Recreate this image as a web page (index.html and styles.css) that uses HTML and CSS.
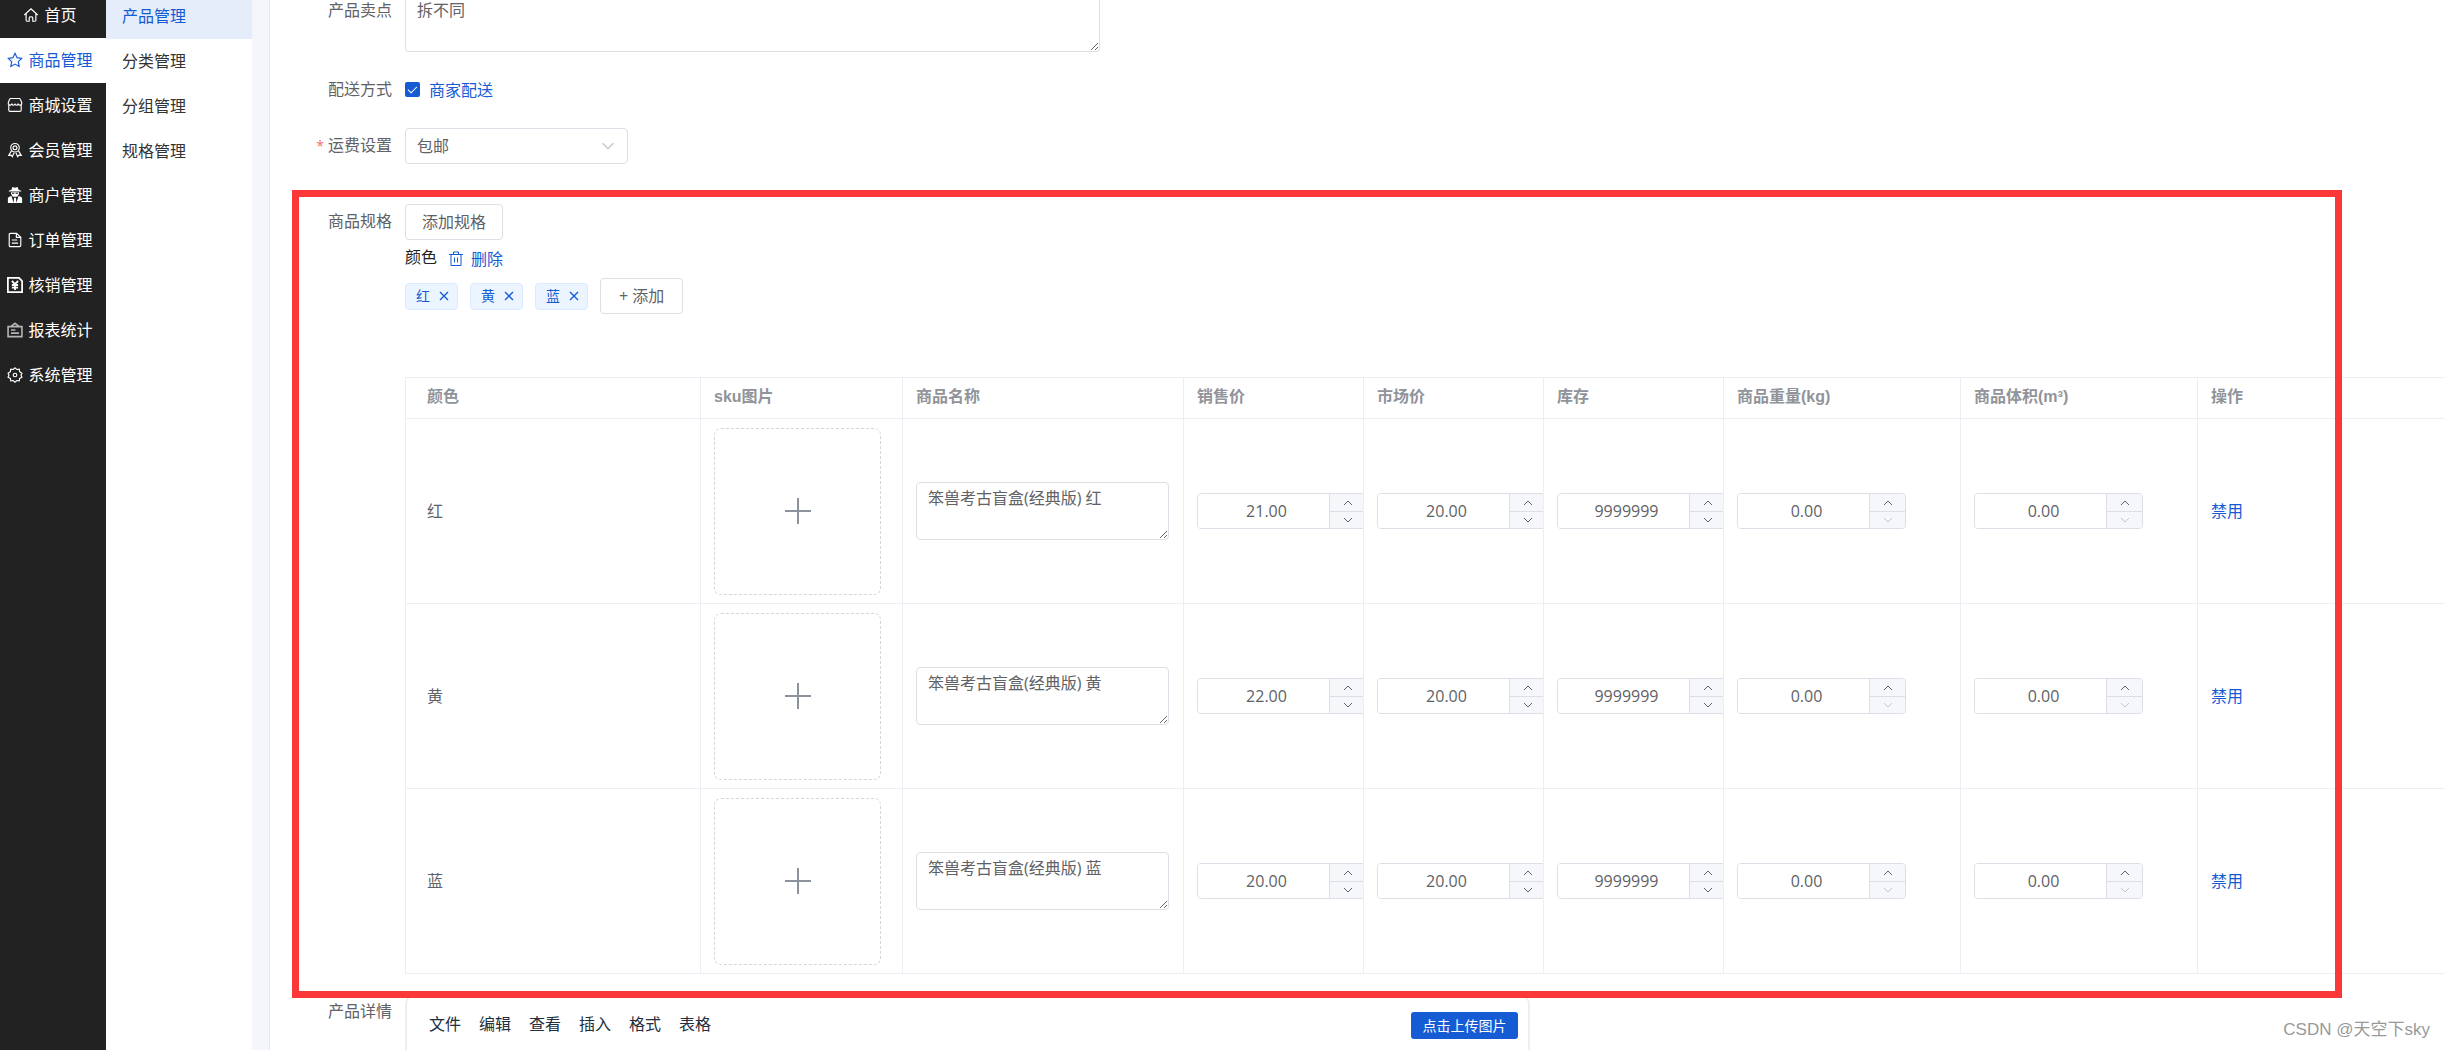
FILE: index.html
```html
<!DOCTYPE html>
<html lang="zh-CN">
<head>
<meta charset="utf-8">
<title>产品管理</title>
<link rel="stylesheet" href="styles.css">
</head>
<body>
<svg class="defs" aria-hidden="true">
  <symbol id="up" viewBox="0 0 12 12"><path d="M2 8l4-4 4 4"/></symbol>
  <symbol id="down" viewBox="0 0 12 12"><path d="M2 4l4 4 4-4"/></symbol>
  <symbol id="plus" viewBox="0 0 26 26"><path d="M13 0v26M0 13h26"/></symbol>
  <symbol id="close" viewBox="0 0 10 10"><path d="M1 1l8 8M9 1L1 9"/></symbol>
</svg>
<div class="app">
  <nav class="sidebar">
    <a href="#"><svg viewBox="0 0 18 18"><path d="M1.500 9L9 2l7.500 7M3.500 7.500V15q0 1 1 1H7v-4q0-1 2-1t2 1v4h2.500q1 0 1-1V7.500"/></svg>首页</a>
    <a href="#" class="active"><svg viewBox="0 0 18 18"><path d="M9 1.500l2.300 4.900 5.200.7-3.800 3.700 1 5.400L9 13.600l-4.700 2.600 1-5.400L1.500 7.100l5.200-.7z"/></svg>商品管理</a>
    <a href="#"><svg viewBox="0 0 18 18"><path d="M1.500 8.500V6L3 2.500q.3-.8 1-.8h10q.7 0 1 .8L16.500 6v2.500M2 8.500v6q0 1.700 1.500 1.700h11q1.500 0 1.500-1.700v-6M1.500 8.500q2.500 1.500 4-.5Q7 10.500 9 8q2 2.500 3.500 0 1.500 2 4 .5"/></svg>商城设置</a>
    <a href="#"><svg viewBox="0 0 18 18"><circle cx="9" cy="6.500" r="4.800"/><circle cx="9" cy="6.500" r="2.200"/><path d="M5 10l-3 5 2.500-.2L6 16.500l2-4.500M13 10l3 5-2.500-.2-1.500 1.700-2-4.500"/></svg>会员管理</a>
    <a href="#"><svg viewBox="0 0 18 18" class="solid"><path d="M6 0l3 .8L12 0l1 3 3 1.200v.8H2v-.8L5 3zM4.500 6h9v2l-2 3h-5l-2-3zM1 18v-5q0-2 4-3l2.500 8zM17 18v-5q0-2-4-3l-2.500 8zM8 12h2l.6 6H7.400z"/><path class="cut" d="M5.500 6.500h2.800v1.200H5.500zM9.700 6.500h2.800v1.200H9.700z"/></svg>商户管理</a>
    <a href="#"><svg viewBox="0 0 18 18"><path d="M3.800 1.500h7L15.500 6v9q0 1.500-1.300 1.500H3.800q-1.300 0-1.300-1.500V3q0-1.500 1.300-1.500zM10.500 1.500V6h5M5.500 9h6M5.500 12.500h7"/></svg>订单管理</a>
    <a href="#"><svg viewBox="0 0 18 18" class="bold"><path d="M1 1h12.500L17 4.500V17H1zM5.500 4.500L9 8l3.500-3.500M5.500 9h7M5.500 12h7M9 8v6.500"/></svg>核销管理</a>
    <a href="#"><svg viewBox="0 0 18 18" class="gray"><path d="M1.200 5.200h15.600v11.300H1.200zM4.500 5L9 1.500 13.500 5M4.500 9h5M4.500 12.500h9"/></svg>报表统计</a>
    <a href="#"><svg viewBox="0 0 18 18"><path d="M9 1l2 1.800 2.800-.4.400 2.800L16.800 7l-1 2 1 2.500-2.600 1.400-.4 2.700-2.800-.4L9 17l-2-1.800-2.800.4-.4-2.700-2.600-1.400 1-2.500-1-2 2.600-1.800.4-2.800 2.800.4z"/><circle cx="9" cy="9" r="2"/></svg>系统管理</a>
  </nav>
  <nav class="submenu">
    <a href="#" class="active">产品管理</a>
    <a href="#">分类管理</a>
    <a href="#">分组管理</a>
    <a href="#">规格管理</a>
  </nav>
  <main class="content">
    <div class="row">
      <label for="selling">产品卖点</label>
      <textarea id="selling" class="selling">拆不同</textarea>
    </div>
    <div class="row delivery">
      <span class="label">配送方式</span>
      <label class="check"><input type="checkbox" checked>商家配送</label>
    </div>
    <div class="row freight">
      <label for="freight" class="required">运费设置</label>
      <div class="select"><select id="freight"><option>包邮</option></select><svg><use href="#down"/></svg></div>
    </div>
    <section class="row spec">
      <span class="label">商品规格</span>
      <div class="spec-body">
        <button type="button" class="btn">添加规格</button>
        <div class="spec-name"><span>颜色</span>
          <button type="button" class="link"><svg viewBox="0 0 16 16"><path d="M1 3.500h14M3 3.500v11h10v-11M5.500 3V1h5v2M6.500 6.500v5M9.500 6.500v5"/></svg>删除</button>
        </div>
        <div class="tags">
          <span class="tag">红<button type="button" aria-label="移除红"><svg><use href="#close"/></svg></button></span>
          <span class="tag">黄<button type="button" aria-label="移除黄"><svg><use href="#close"/></svg></button></span>
          <span class="tag">蓝<button type="button" aria-label="移除蓝"><svg><use href="#close"/></svg></button></span>
          <button type="button" class="btn">+ 添加</button>
        </div>
        <table>
          <colgroup><col class="c-color"><col class="c-image"><col class="c-name"><col class="c-num"><col class="c-num"><col class="c-num"><col class="c-size"><col class="c-size"><col></colgroup>
          <thead>
            <tr><th>颜色</th><th>sku图片</th><th>商品名称</th><th>销售价</th><th>市场价</th><th>库存</th><th>商品重量(kg)</th><th>商品体积(m³)</th><th>操作</th></tr>
          </thead>
          <tbody>
            <tr>
              <td>红</td>
              <td><button type="button" class="upload" aria-label="上传图片"><svg><use href="#plus"/></svg></button></td>
              <td><textarea aria-label="商品名称">笨兽考古盲盒(经典版) 红</textarea></td>
              <td><div class="number"><input type="text" aria-label="销售价" value="21.00"><button type="button" aria-label="增加"><svg><use href="#up"/></svg></button><button type="button" aria-label="减少"><svg><use href="#down"/></svg></button></div></td>
              <td><div class="number"><input type="text" aria-label="市场价" value="20.00"><button type="button" aria-label="增加"><svg><use href="#up"/></svg></button><button type="button" aria-label="减少"><svg><use href="#down"/></svg></button></div></td>
              <td><div class="number"><input type="text" aria-label="库存" value="9999999"><button type="button" aria-label="增加"><svg><use href="#up"/></svg></button><button type="button" aria-label="减少"><svg><use href="#down"/></svg></button></div></td>
              <td><div class="number"><input type="text" aria-label="商品重量" value="0.00"><button type="button" aria-label="增加"><svg><use href="#up"/></svg></button><button type="button" aria-label="减少" disabled><svg><use href="#down"/></svg></button></div></td>
              <td><div class="number"><input type="text" aria-label="商品体积" value="0.00"><button type="button" aria-label="增加"><svg><use href="#up"/></svg></button><button type="button" aria-label="减少" disabled><svg><use href="#down"/></svg></button></div></td>
              <td><button type="button" class="link">禁用</button></td>
            </tr>
            <tr>
              <td>黄</td>
              <td><button type="button" class="upload" aria-label="上传图片"><svg><use href="#plus"/></svg></button></td>
              <td><textarea aria-label="商品名称">笨兽考古盲盒(经典版) 黄</textarea></td>
              <td><div class="number"><input type="text" aria-label="销售价" value="22.00"><button type="button" aria-label="增加"><svg><use href="#up"/></svg></button><button type="button" aria-label="减少"><svg><use href="#down"/></svg></button></div></td>
              <td><div class="number"><input type="text" aria-label="市场价" value="20.00"><button type="button" aria-label="增加"><svg><use href="#up"/></svg></button><button type="button" aria-label="减少"><svg><use href="#down"/></svg></button></div></td>
              <td><div class="number"><input type="text" aria-label="库存" value="9999999"><button type="button" aria-label="增加"><svg><use href="#up"/></svg></button><button type="button" aria-label="减少"><svg><use href="#down"/></svg></button></div></td>
              <td><div class="number"><input type="text" aria-label="商品重量" value="0.00"><button type="button" aria-label="增加"><svg><use href="#up"/></svg></button><button type="button" aria-label="减少" disabled><svg><use href="#down"/></svg></button></div></td>
              <td><div class="number"><input type="text" aria-label="商品体积" value="0.00"><button type="button" aria-label="增加"><svg><use href="#up"/></svg></button><button type="button" aria-label="减少" disabled><svg><use href="#down"/></svg></button></div></td>
              <td><button type="button" class="link">禁用</button></td>
            </tr>
            <tr>
              <td>蓝</td>
              <td><button type="button" class="upload" aria-label="上传图片"><svg><use href="#plus"/></svg></button></td>
              <td><textarea aria-label="商品名称">笨兽考古盲盒(经典版) 蓝</textarea></td>
              <td><div class="number"><input type="text" aria-label="销售价" value="20.00"><button type="button" aria-label="增加"><svg><use href="#up"/></svg></button><button type="button" aria-label="减少"><svg><use href="#down"/></svg></button></div></td>
              <td><div class="number"><input type="text" aria-label="市场价" value="20.00"><button type="button" aria-label="增加"><svg><use href="#up"/></svg></button><button type="button" aria-label="减少"><svg><use href="#down"/></svg></button></div></td>
              <td><div class="number"><input type="text" aria-label="库存" value="9999999"><button type="button" aria-label="增加"><svg><use href="#up"/></svg></button><button type="button" aria-label="减少"><svg><use href="#down"/></svg></button></div></td>
              <td><div class="number"><input type="text" aria-label="商品重量" value="0.00"><button type="button" aria-label="增加"><svg><use href="#up"/></svg></button><button type="button" aria-label="减少" disabled><svg><use href="#down"/></svg></button></div></td>
              <td><div class="number"><input type="text" aria-label="商品体积" value="0.00"><button type="button" aria-label="增加"><svg><use href="#up"/></svg></button><button type="button" aria-label="减少" disabled><svg><use href="#down"/></svg></button></div></td>
              <td><button type="button" class="link">禁用</button></td>
            </tr>
          </tbody>
        </table>
      </div>
      <div class="highlight"></div>
    </section>
    <div class="row detail">
      <span class="label">产品详情</span>
      <div class="editor">
        <div class="menubar">
          <button type="button">文件</button><button type="button">编辑</button><button type="button">查看</button><button type="button">插入</button><button type="button">格式</button><button type="button">表格</button>
        </div>
        <button type="button" class="primary">点击上传图片</button>
      </div>
    </div>
    <div class="watermark">CSDN @天空下sky</div>
  </main>
</div>
</body>
</html>
```
FILE: styles.css
```css
* { box-sizing: border-box; }

body {
  margin: 0;
  font: 16px/24px "Open Sans", "Noto Sans CJK SC", sans-serif;
  color: #606266;
  background: #fff;
}

button, input, select, textarea { font: inherit; color: inherit; }
button { padding: 0; border: 0; background: none; }
a { text-decoration: none; }
svg { fill: none; stroke: currentColor; flex: none; }
.defs { display: none; }

.app { display: flex; height: 100vh; overflow: hidden; }

/* Navigation, scrolled a few pixels down */
.sidebar { flex: 0 0 106px; background: #222; color: #fff; }
.sidebar a {
  display: flex;
  align-items: center;
  justify-content: center;
  gap: 5px;
  height: 45px;
  padding: 0 6px 2px 0;
  color: inherit;
}
.sidebar a:first-child { margin-top: -7px; }
.sidebar a.active { background: #fff; color: #155bd4; }
.sidebar svg { width: 16px; height: 16px; stroke-width: 1.3; }
.sidebar .solid { fill: #fff; stroke: none; }
.sidebar .cut { fill: #222; }
.sidebar .bold { stroke-width: 2; }
.sidebar .gray { color: #b4b4b4; stroke-width: 1.8; }

.submenu { flex: 0 0 146px; }
.submenu a {
  display: flex;
  align-items: center;
  height: 45px;
  padding: 0 0 2px 16px;
  color: #333;
}
.submenu a:first-child { margin-top: -6px; }
.submenu a.active { background: #e5ecfa; color: #155bd4; }

.content {
  flex: 1;
  min-width: 0;
  display: flex;
  flex-direction: column;
  border-left: 17px solid #f4f6fb;
  box-shadow: inset 1px 0 #e4e7ed;
}

.row {
  display: grid;
  grid-template-columns: 123px minmax(0, 1fr);
  column-gap: 13px;
}
.row > label:first-child, .label { text-align: right; line-height: 34px; }
.row > label[for="selling"] { line-height: 20px; }

textarea {
  display: block;
  width: 253px;
  height: 58px;
  padding: 3px 11px;
  border: 1px solid #dcdfe6;
  border-radius: 4px;
  background: #fff;
}
.selling {
  width: 695px;
  height: 52px;
  padding-top: 0;
  border-top: 0;
  border-radius: 0 0 4px 4px;
  line-height: 20px;
}

.delivery { margin-top: 20px; }
.check { display: flex; align-items: center; gap: 9px; height: 36px; padding-bottom: 1px; color: #155bd4; }
.check input {
  appearance: none;
  display: grid;
  place-items: center;
  width: 15px;
  height: 15px;
  margin: 0;
  border-radius: 2px;
  background: #155bd4;
}
.check input::after {
  content: "";
  width: 4px;
  height: 8px;
  margin-bottom: 2px;
  border: solid #fff;
  border-width: 0 1px 1px 0;
  rotate: 45deg;
}

.freight { margin-top: 20px; }
.required::before { content: "*"; margin-right: 4px; color: #f56c6c; font-size: 14px; line-height: 1; }
.select { display: grid; width: 223px; height: 36px; align-items: center; }
.select > * { grid-area: 1 / 1; }
.select select {
  appearance: none;
  height: 36px;
  padding: 0 11px;
  border: 1px solid #dcdfe6;
  border-radius: 4px;
  background: #fff;
}
.select svg { justify-self: end; width: 16px; height: 16px; margin-right: 12px; color: #c0c4cc; pointer-events: none; }

.spec { position: relative; margin-top: 40px; }
.spec-body { display: flex; flex-direction: column; align-items: flex-start; }
.btn {
  height: 36px;
  padding: 0 16px;
  border: 1px solid #dcdfe6;
  border-radius: 4px;
  background: #fff;
}
.spec-name { display: flex; align-items: center; gap: 11px; height: 38px; color: #222; }
.spec-name span { padding-bottom: 4px; }
.link { display: flex; align-items: center; gap: 7px; color: #155bd4; }
.link svg { width: 16px; height: 16px; }

.tags { display: flex; align-items: center; gap: 12px; margin-bottom: 63px; }
.tag {
  display: flex;
  align-items: center;
  gap: 9px;
  height: 27px;
  padding: 0 8px 0 10px;
  border: 1px solid #d9ecff;
  border-radius: 4px;
  background: #ecf5ff;
  color: #155bd4;
  font-size: 14px;
}
.tag button { display: flex; }
.tag svg { width: 10px; height: 10px; stroke-width: 1.4; }
.tags .btn { padding: 0 18px; }

table {
  width: 100%;
  table-layout: fixed;
  border-collapse: separate;
  border-spacing: 0;
  border: solid #ebeef5;
  border-width: 1px 0 0 1px;
}
.c-color { width: 295px; }
.c-image { width: 202px; }
.c-name { width: 281px; }
.c-num { width: 180px; }
.c-size { width: 237px; }
th, td {
  overflow: hidden;
  padding: 0 0 0 13px;
  border: solid #ebeef5;
  border-width: 0 1px 1px 0;
  text-align: left;
}
th:first-child, td:first-child { padding-left: 21px; }
th:last-child, td:last-child { border-right: 0; }
th {
  height: 41px;
  padding-bottom: 3px;
  font-family: "Liberation Sans", "Noto Sans CJK SC", sans-serif;
  font-weight: bold;
  color: #909399;
}
td { height: 185px; }

.upload {
  display: grid;
  place-items: center;
  width: 167px;
  height: 167px;
  border: 1px dashed #d4d6d9;
  border-radius: 7px;
  color: #8c939d;
}
.upload svg { width: 26px; height: 26px; stroke-width: 2; }

.number {
  display: grid;
  grid-template: 17px 17px / 131px 36px;
  width: 169px;
  overflow: hidden;
  border: 1px solid #dcdfe6;
  border-radius: 4px;
}
.number input {
  grid-row: span 2;
  min-width: 0;
  padding: 0 0 0 6px;
  border: 0;
  text-align: center;
}
.number button {
  display: grid;
  place-items: center;
  border-left: 1px solid #dcdfe6;
  background: #f5f7fa;
}
.number button:last-child { border-top: 1px solid #dcdfe6; }
.number button:disabled { color: #c0c4cc; }
.number svg { width: 12px; height: 12px; }

/* Annotation frame over the specification block */
.highlight {
  position: absolute;
  inset: -14px 103px -24px 23px;
  border: 7px solid #fb3838;
  pointer-events: none;
}

.detail { flex: 1; margin-top: 20px; }
.editor {
  display: flex;
  align-items: flex-start;
  justify-content: space-between;
  width: 1125px;
  padding: 16px 10px 0 22px;
  border: solid #eee;
  border-width: 2px 2px 0;
  border-radius: 10px 10px 0 0;
}
.menubar { display: flex; gap: 18px; color: #222f3e; }
.primary {
  width: 107px;
  height: 27px;
  border-radius: 3px;
  background: #155bd4;
  color: #fff;
  font-size: 14px;
}

.watermark {
  position: absolute;
  right: 15px;
  bottom: 8px;
  color: #999;
  font-family: "Liberation Sans", "Noto Sans CJK SC", sans-serif;
  font-size: 17px;
}
```
